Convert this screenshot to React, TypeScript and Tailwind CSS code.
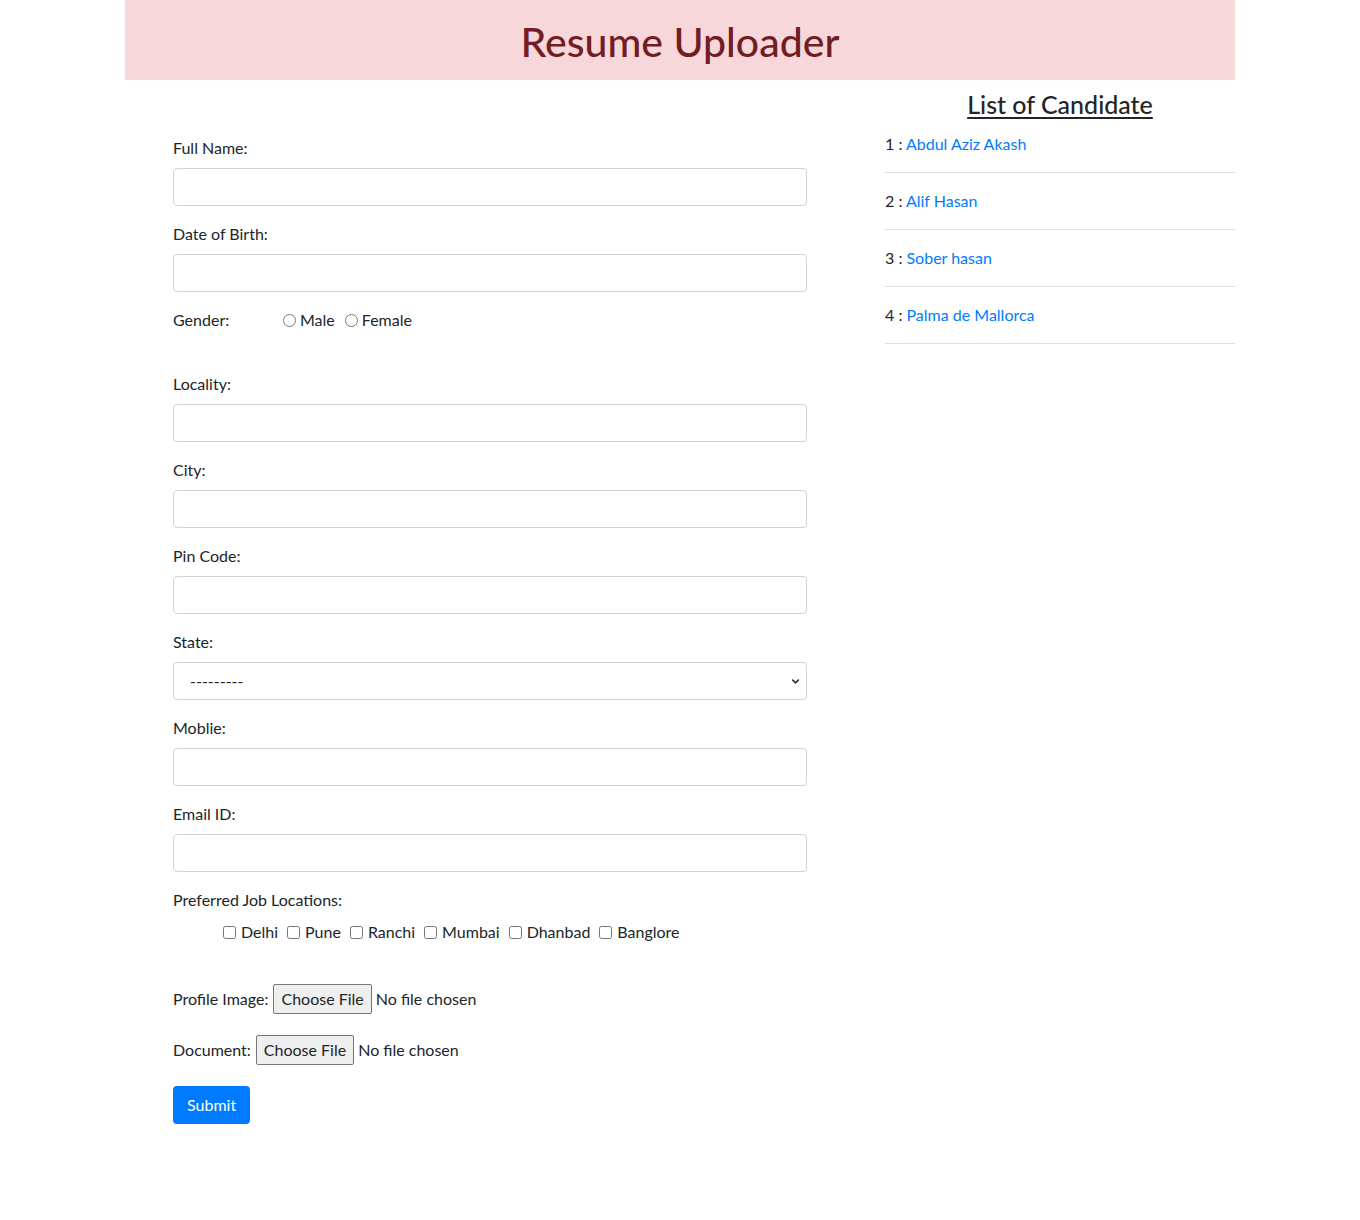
import { ChevronDown } from 'lucide-react';

const textFields = ['Locality:', 'City:', 'Pin Code:'];
const locations = ['Delhi', 'Pune', 'Ranchi', 'Mumbai', 'Dhanbad', 'Banglore'];
const candidates = ['Abdul Aziz Akash', 'Alif Hasan', 'Sober hasan', 'Palma de Mallorca'];

const Field = ({ label }: { label: string }) => (
  <div className="mb-4">
    <label className="block leading-6 mb-2">{label}</label>
    <input
      type="text"
      className="block w-full h-[38px] px-3 border border-[#ced4da] rounded-[4px] bg-white outline-none"
    />
  </div>
);

const FileRow = ({ label }: { label: string }) => (
  <div className="flex items-center h-[30px] mb-[21px]">
    <span className="mr-[5px]">{label}</span>
    <label className="flex items-center cursor-pointer">
      <span className="h-[30px] px-[7px] flex items-center border border-[#767676] bg-[#efefef] rounded-[2px] text-[#212529]">
        Choose File
      </span>
      <span className="ml-[4px]">No file chosen</span>
      <input type="file" className="hidden" />
    </label>
  </div>
);

export default function App() {
  return (
    <div className="min-h-[1220px] bg-white text-[#212529] text-base font-['Lato','Liberation_Sans',sans-serif]">
      <div className="mx-auto w-[1110px]">
        <header className="h-20 bg-[#f8d7da] flex items-center justify-center">
          <h1 className="text-[41px] leading-none font-medium text-[#721c24] pt-[3px]">Resume Uploader</h1>
        </header>

        <div className="flex">
          {/* form column */}
          <div className="w-[760px] pl-12 pt-14">
            <form className="w-[634px]" onSubmit={e => e.preventDefault()}>
              <Field label="Full Name:" />
              <Field label="Date of Birth:" />

              <div className="flex items-center leading-6 mb-10">
                <span className="w-[105px]">Gender:</span>
                <label className="flex items-center gap-[4px] ml-[5px] mr-[10px]">
                  <input type="radio" name="gender" className="m-0 w-[13px] h-[13px]" />
                  Male
                </label>
                <label className="flex items-center gap-[4px]">
                  <input type="radio" name="gender" className="m-0 w-[13px] h-[13px]" />
                  Female
                </label>
              </div>

              {textFields.map(f => (
                <Field key={f} label={f} />
              ))}

              <div className="mb-4">
                <label className="block leading-6 mb-2">State:</label>
                <div className="relative">
                  <select className="block w-full h-[38px] pl-4 pr-8 border border-[#ced4da] rounded-[4px] bg-white appearance-none outline-none">
                    <option>---------</option>
                  </select>
                  <ChevronDown
                    className="absolute right-[6px] top-[14px] w-[11px] h-[11px] text-[#333] pointer-events-none"
                    strokeWidth={3.5}
                  />
                </div>
              </div>

              <Field label="Moblie:" />
              <Field label="Email ID:" />

              <label className="block leading-6 mb-2">Preferred Job Locations:</label>
              <div className="flex items-center leading-6 pl-[50px] mb-10">
                {locations.map(l => (
                  <label key={l} className="flex items-center gap-[5px] mr-[9px]">
                    <input type="checkbox" className="m-0 w-[13px] h-[13px]" />
                    {l}
                  </label>
                ))}
              </div>

              <FileRow label="Profile Image:" />
              <FileRow label="Document:" />

              <button
                type="submit"
                className="h-[38px] px-[14px] rounded-[4px] bg-[#007bff] text-white"
              >
                Submit
              </button>
            </form>
          </div>

          {/* candidate list */}
          <div className="w-[350px] pt-3">
            <h4 className="text-[25px] leading-6 font-medium text-center underline underline-offset-[3px]">
              List of Candidate
            </h4>
            <ul>
              {candidates.map((c, i) => (
                <li key={c} className="py-4 leading-6 border-b border-[#dfdfdf]">
                  {i + 1} : <a href="#" className="text-[#007bff]">{c}</a>
                </li>
              ))}
            </ul>
          </div>
        </div>
      </div>
    </div>
  );
}
